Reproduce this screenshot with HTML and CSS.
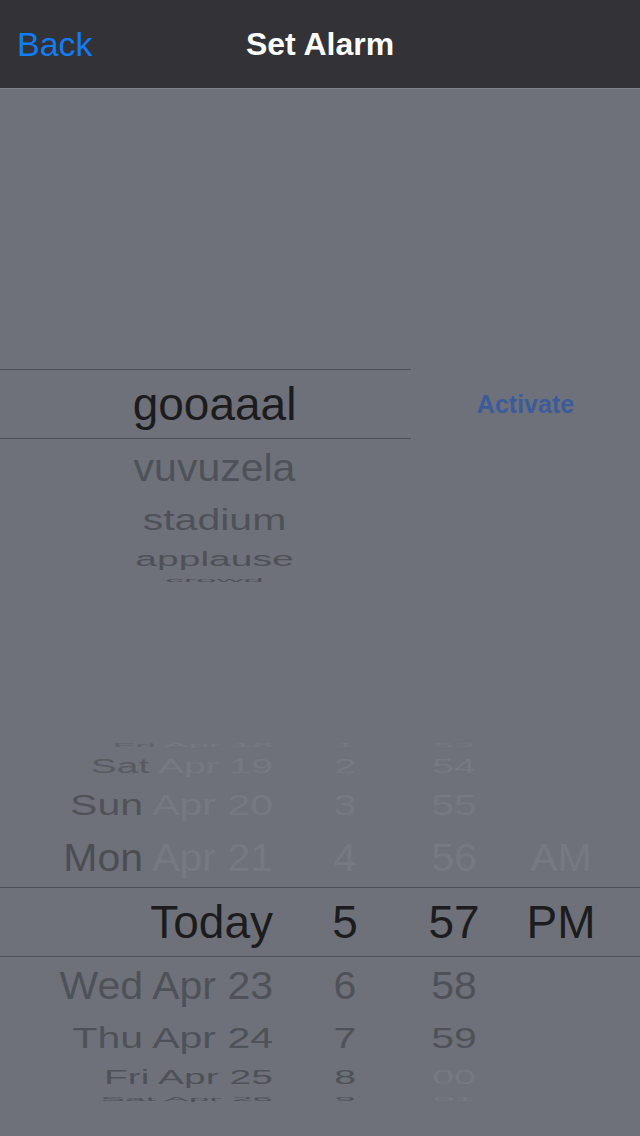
FILE: index.html
```html
<!DOCTYPE html>
<html lang="en">
<head>
    <meta charset="UTF-8">
    <meta name="viewport" content="width=device-width, initial-scale=1.0">
    <title>Set Alarm</title>
    <link rel="stylesheet" href="styles.css">
</head>
<body>
    <header class="navbar">
        <a class="back" href="#">Back</a>
        <h1 class="title">Set Alarm</h1>
    </header>

    <main class="content">
        <section class="sound">
            <div class="wheel sound-wheel">
                <div class="row sel"><span>gooaaal</span></div>
                <div class="row near dark"><span>vuvuzela</span></div>
                <div class="row mid dark2"><span>stadium</span></div>
                <div class="row far dark3"><span>applause</span></div>
                <div class="row edge dark4"><span>crowd</span></div>
            </div>
            <div class="activate-box">
                <button class="activate">Activate</button>
            </div>
        </section>

        <section class="wheel date-wheel">
            <div class="row edge">
                <span class="date"><b class="d4">Fri</b> <i class="faint">Apr 18</i></span>
                <span class="faint">1</span><span class="faint">53</span><span></span>
            </div>
            <div class="row far">
                <span class="date"><b class="d3">Sat</b> <i class="faint">Apr 19</i></span>
                <span class="faint">2</span><span class="faint">54</span><span></span>
            </div>
            <div class="row mid">
                <span class="date"><b class="d2">Sun</b> <i class="faint">Apr 20</i></span>
                <span class="faint">3</span><span class="faint">55</span><span></span>
            </div>
            <div class="row near">
                <span class="date"><b class="d1">Mon</b> <i class="faint">Apr 21</i></span>
                <span class="faint">4</span><span class="faint">56</span><span class="faint">AM</span>
            </div>
            <div class="row sel">
                <span class="date">Today</span>
                <span>5</span><span>57</span><span>PM</span>
            </div>
            <div class="row near dark">
                <span class="date">Wed Apr 23</span>
                <span>6</span><span>58</span><span></span>
            </div>
            <div class="row mid dark2">
                <span class="date">Thu Apr 24</span>
                <span>7</span><span>59</span><span></span>
            </div>
            <div class="row far dark3">
                <span class="date">Fri Apr 25</span>
                <span>8</span><span class="faint">00</span><span></span>
            </div>
            <div class="row edge dark4">
                <span class="date">Sat Apr 26</span>
                <span>9</span><span class="faint">01</span><span></span>
            </div>
        </section>
    </main>
</body>
</html>
```

FILE: styles.css
```css
body {
    margin: 0;
    height: 1136px;
    background: #6e717a;
    font-family: "Liberation Sans", Arial, sans-serif;
    overflow: hidden;
}

.navbar {
    height: 88px;
    background: #323237;
    border-bottom: 1px solid #7e8188;
    display: flex;
    align-items: center;
    position: relative;
}
.back {
    margin-left: 17px;
    color: #127bf6;
    font-size: 34px;
    line-height: 1;
    text-decoration: none;
}
.title {
    position: absolute; /* centred over the bar, independent of the back link */
    left: 0;
    right: 0;
    margin: 0;
    text-align: center;
    color: white;
    font-size: 32px;
    font-weight: bold;
    line-height: 1;
    pointer-events: none;
}

/* picker wheels */
.wheel .row {
    display: flex;
    align-items: center;
    color: #4f5158;
    font-size: 41px;
}
.wheel .row > * {
    display: inline-block;
    line-height: 1;
    white-space: nowrap;
}
.row.sel {
    height: 68px;
    border-top: 1px solid #4e5057;
    border-bottom: 1px solid #4e5057;
    color: #1c1c1f;
    font-size: 46px;
}
.row.near { height: 58px; }
.row.near > * { transform: scaleY(0.95); }
.row.mid { height: 47px; }
.row.mid > * { transform: scaleY(0.72); }
.row.far { height: 31px; font-size: 39px; }
.row.far > * { transform: scaleY(0.5); }
.row.edge { height: 11px; font-size: 37px; }
.row.edge > * { transform: scaleY(0.16); }

.dark { color: #4f5158; }
.dark2 { color: #55575e; }
.dark3 { color: #5d5f66; }
.dark4 { color: #63656c; }
.faint { color: #767981; }
.d1 { color: #4b4d53; }
.d2 { color: #505258; }
.d3 { color: #585a60; }
.d4 { color: #606269; }
b, i {
    font-weight: normal;
    font-style: normal;
}

/* sound picker */
.content {
    display: flex;
    flex-direction: column;
}
.sound {
    display: flex;
    margin-top: 280px;
}
.sound-wheel {
    width: 411px;
}
.sound-wheel .row {
    justify-content: center;
    padding-left: 18px;
}
.activate-box {
    flex: 1;
    height: 70px;
    display: flex;
    align-items: center;
    justify-content: center;
}
.activate {
    background: none;
    border: none;
    padding: 0;
    color: #3c5b9a;
    font-family: "Liberation Sans", Arial, sans-serif;
    font-size: 25px;
    font-weight: bold;
    cursor: pointer;
}

/* date picker */
.date-wheel {
    margin-top: 154px;
}
.date-wheel .row {
    display: grid;
    grid-template-columns: 273px 144px 74px 140px;
    grid-template-rows: 100%;
    text-align: center;
}
.date-wheel .row > * {
    display: block;
}
.date-wheel .row > .date {
    text-align: right;
    transform-origin: right center;
}
```
